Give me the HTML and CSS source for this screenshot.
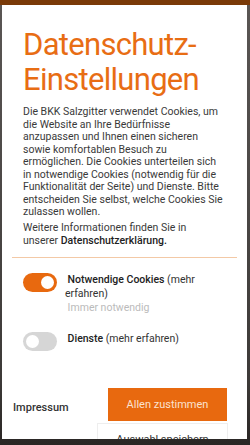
FILE: index.html
```html
<!DOCTYPE html>
<html lang="de">
<head>
<meta charset="utf-8">
<link rel="stylesheet" href="styles.css">
</head>
<body>
<div class="page">
  <div class="topbar"></div>
  <div class="backdrop"></div>
</div>
<div class="modal">
  <div class="content">
    <h1 class="title">Datenschutz-<br>Einstellungen</h1>
    <p class="text">Die BKK Salzgitter verwendet Cookies, um<br>die Website an Ihre Bedürfnisse<br>anzupassen und Ihnen einen sicheren<br>sowie komfortablen Besuch zu<br>ermöglichen. Die Cookies unterteilen sich<br>in notwendige Cookies (notwendig für die<br>Funktionalität der Seite) und Dienste. Bitte<br>entscheiden Sie selbst, welche Cookies Sie<br>zulassen wollen.</p>
    <p class="text more">Weitere Informationen finden Sie in<br>unserer <b>Datenschutzerklärung.</b></p>
  </div>
  <hr class="sep">
  <div class="content">
    <div class="option">
      <span class="toggle on"><span class="knob"></span></span>
      <div class="opt-text">
        <div class="opt-label">&nbsp;<b>Notwendige Cookies</b> (mehr erfahren)</div>
        <div class="opt-sub">&nbsp;Immer notwendig</div>
      </div>
    </div>
    <div class="option">
      <span class="toggle"><span class="knob"></span></span>
      <div class="opt-text">
        <div class="opt-label">&nbsp;<b>Dienste</b> (mehr erfahren)</div>
      </div>
    </div>
  </div>
  <div class="footer">
    <a class="imprint">Impressum</a>
    <div class="buttons">
      <button class="btn primary">Allen zustimmen</button>
      <button class="btn secondary">Auswahl speichern</button>
    </div>
  </div>
</div>
</body>
</html>
```
FILE: styles.css
```css
html, body {
  margin: 0;
  padding: 0;
  height: 100%;
  overflow: hidden;
}
body {
  font-family: Roboto, "Liberation Sans", sans-serif;
  background: #4a4643;
}
.page {
  height: 100%;
  display: flex;
  flex-direction: column;
}
.topbar {
  height: 5px;
  background: #7a3a08;
}
.backdrop {
  flex: 1;
  background: linear-gradient(180deg, #5a5654 0%, #3d3a38 85%, #2a2624 100%);
}
.modal {
  position: fixed;
  top: 5px;
  left: 2px;
  right: 3px;
  bottom: 6px;
  background: #fff;
  overflow: hidden;
}
.content {
  padding: 0 21px;
}
.title {
  margin: 22px 0 0;
  font-weight: 400;
  font-size: 31px;
  line-height: 35px;
  letter-spacing: -0.7px;
  color: #e86d14;
}
.text {
  margin: 9px 0 0;
  font-size: 10.5px;
  line-height: 12.5px;
  color: #3a3a3a;
  white-space: nowrap;
}
.text.more {
  margin-top: 3.5px;
}
.text b {
  font-weight: 500;
  color: #222;
}
.sep {
  margin: 10px 10px 0;
  border: 0;
  border-top: 1px solid #f3c9a6;
}
.option {
  display: flex;
  align-items: flex-start;
  gap: 8px;
  margin-top: 15px;
}
.option + .option {
  margin-top: 17px;
}
.toggle {
  flex: none;
  width: 34px;
  height: 19px;
  border-radius: 10px;
  background: #d6d6d6;
  position: relative;
}
.toggle.on {
  background: #e8690f;
}
.knob {
  position: absolute;
  top: 3px;
  left: 3px;
  width: 13px;
  height: 13px;
  border-radius: 50%;
  background: #fff;
}
.toggle.on .knob {
  left: 18px;
}
.opt-text {
  font-size: 10.5px;
  line-height: 14px;
  color: #333;
}
.opt-label b {
  font-weight: 500;
  color: #222;
}
.opt-sub {
  color: #bbb;
}
.footer {
  display: flex;
  align-items: flex-start;
  justify-content: space-between;
  margin-top: 37px;
  padding: 0 19px 0 11px;
}
.imprint {
  font-size: 11px;
  line-height: 13px;
  font-weight: 500;
  color: #333;
  margin-top: 12.5px;
}
.buttons {
  display: flex;
  flex-direction: column;
  align-items: flex-end;
  gap: 2px;
}
.btn {
  font-family: inherit;
  font-size: 11px;
  border: 0;
  height: 33px;
  padding: 0;
  cursor: pointer;
}
.btn.primary {
  width: 119px;
  margin-right: 1px;
  background: #e8690f;
  color: #fbe2cf;
}
.btn.secondary {
  width: 131px;
  background: #fff;
  border: 1px solid #eee;
  color: #333;
}
```
